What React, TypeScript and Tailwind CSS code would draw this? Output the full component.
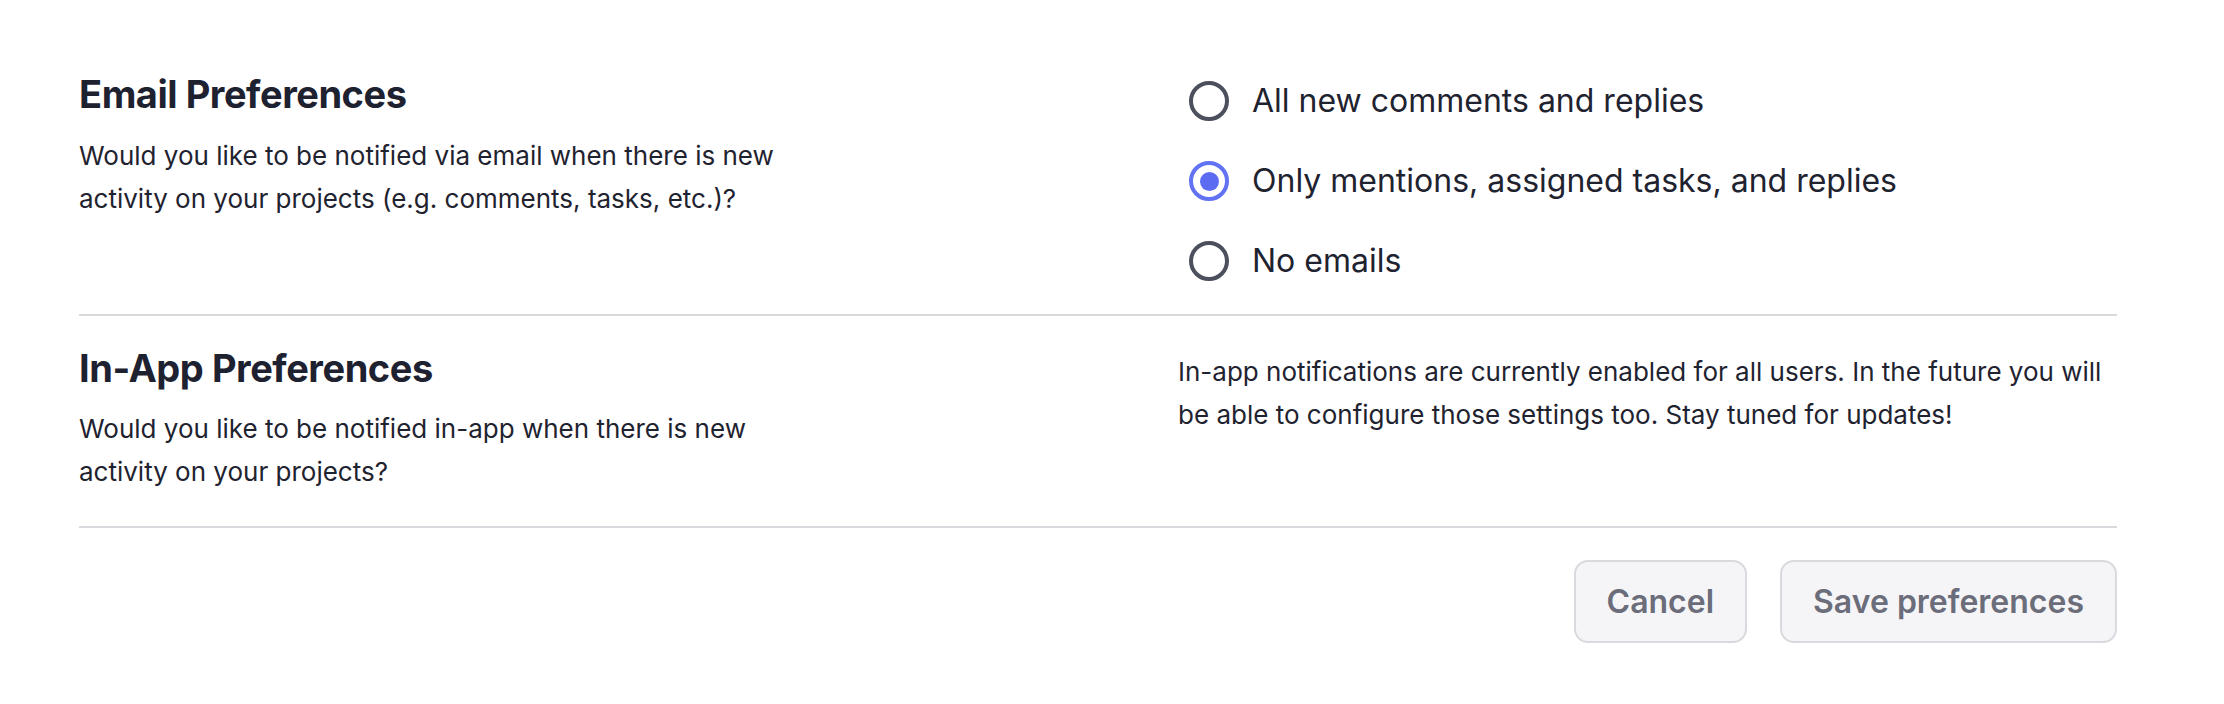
import React from "react";

const font = { fontFamily: "Inter, 'Noto Sans', sans-serif" };

function Radio({ checked, label }: { checked?: boolean; label: string }) {
  return (
    <label className="flex h-[80px] items-center gap-[23px]">
      {checked ? (
        <span className="flex h-[40px] w-[40px] shrink-0 items-center justify-center rounded-full border-[4px] border-[#6172f3] bg-white">
          <span className="h-[19px] w-[19px] rounded-full bg-[#5b6cf2]" />
        </span>
      ) : (
        <span className="h-[40px] w-[40px] shrink-0 rounded-full border-[4px] border-[#4b505c] bg-white" />
      )}
      <span className="text-[32px] leading-[40px] text-[#1f2330]">{label}</span>
    </label>
  );
}

export default function App() {
  return (
    <div className="min-h-[704px] w-[2224px] bg-white" style={font}>
      <div className="w-[2038px] pl-[79px] box-content">
        {/* Email preferences */}
        <div className="flex">
          <div className="w-[1099px] pt-[71px]">
            <h2 className="text-[38px] font-bold leading-[46px] tracking-[-0.012em] text-[#1e2230]">
              Email Preferences
            </h2>
            <p className="mt-[18px] max-w-[730px] text-[26px] leading-[42.5px] text-[#1f2330]">
              Would you like to be notified via email when there is new activity on your projects (e.g. comments, tasks, etc.)?
            </p>
          </div>
          <div className="flex flex-1 flex-col pl-[11px] pt-[61px] pb-[13px]">
            <Radio label="All new comments and replies" />
            <Radio checked label="Only mentions, assigned tasks, and replies" />
            <Radio label="No emails" />
          </div>
        </div>
        <div className="h-[2px] bg-[#d8d8dd]" />

        {/* In-app preferences */}
        <div className="flex">
          <div className="w-[1099px] pt-[29px] pb-[33px]">
            <h2 className="text-[38px] font-bold leading-[46px] tracking-[-0.012em] text-[#1e2230]">
              In-App Preferences
            </h2>
            <p className="mt-[17px] max-w-[730px] text-[26px] leading-[42.5px] text-[#1f2330]">
              Would you like to be notified in-app when there is new activity on your projects?
            </p>
          </div>
          <div className="flex-1 pt-[35px]">
            <p className="text-[26px] leading-[42.5px] text-[#1f2330]">
              In-app notifications are currently enabled for all users. In the future you will be able to configure those settings too. Stay tuned for updates!
            </p>
          </div>
        </div>
        <div className="h-[2px] bg-[#d8d8dd]" />

        {/* Actions */}
        <div className="flex justify-end gap-[33px] pt-[32px]">
          <button className="h-[83px] rounded-[14px] border-2 border-[#d9d9de] bg-[#f5f5f8] px-[31px] text-[32px] font-semibold text-[#6b6d7a]">
            Cancel
          </button>
          <button className="h-[83px] rounded-[14px] border-2 border-[#d9d9de] bg-[#f5f5f8] px-[31px] text-[32px] font-semibold text-[#6b6d7a]">
            Save preferences
          </button>
        </div>
      </div>
    </div>
  );
}
